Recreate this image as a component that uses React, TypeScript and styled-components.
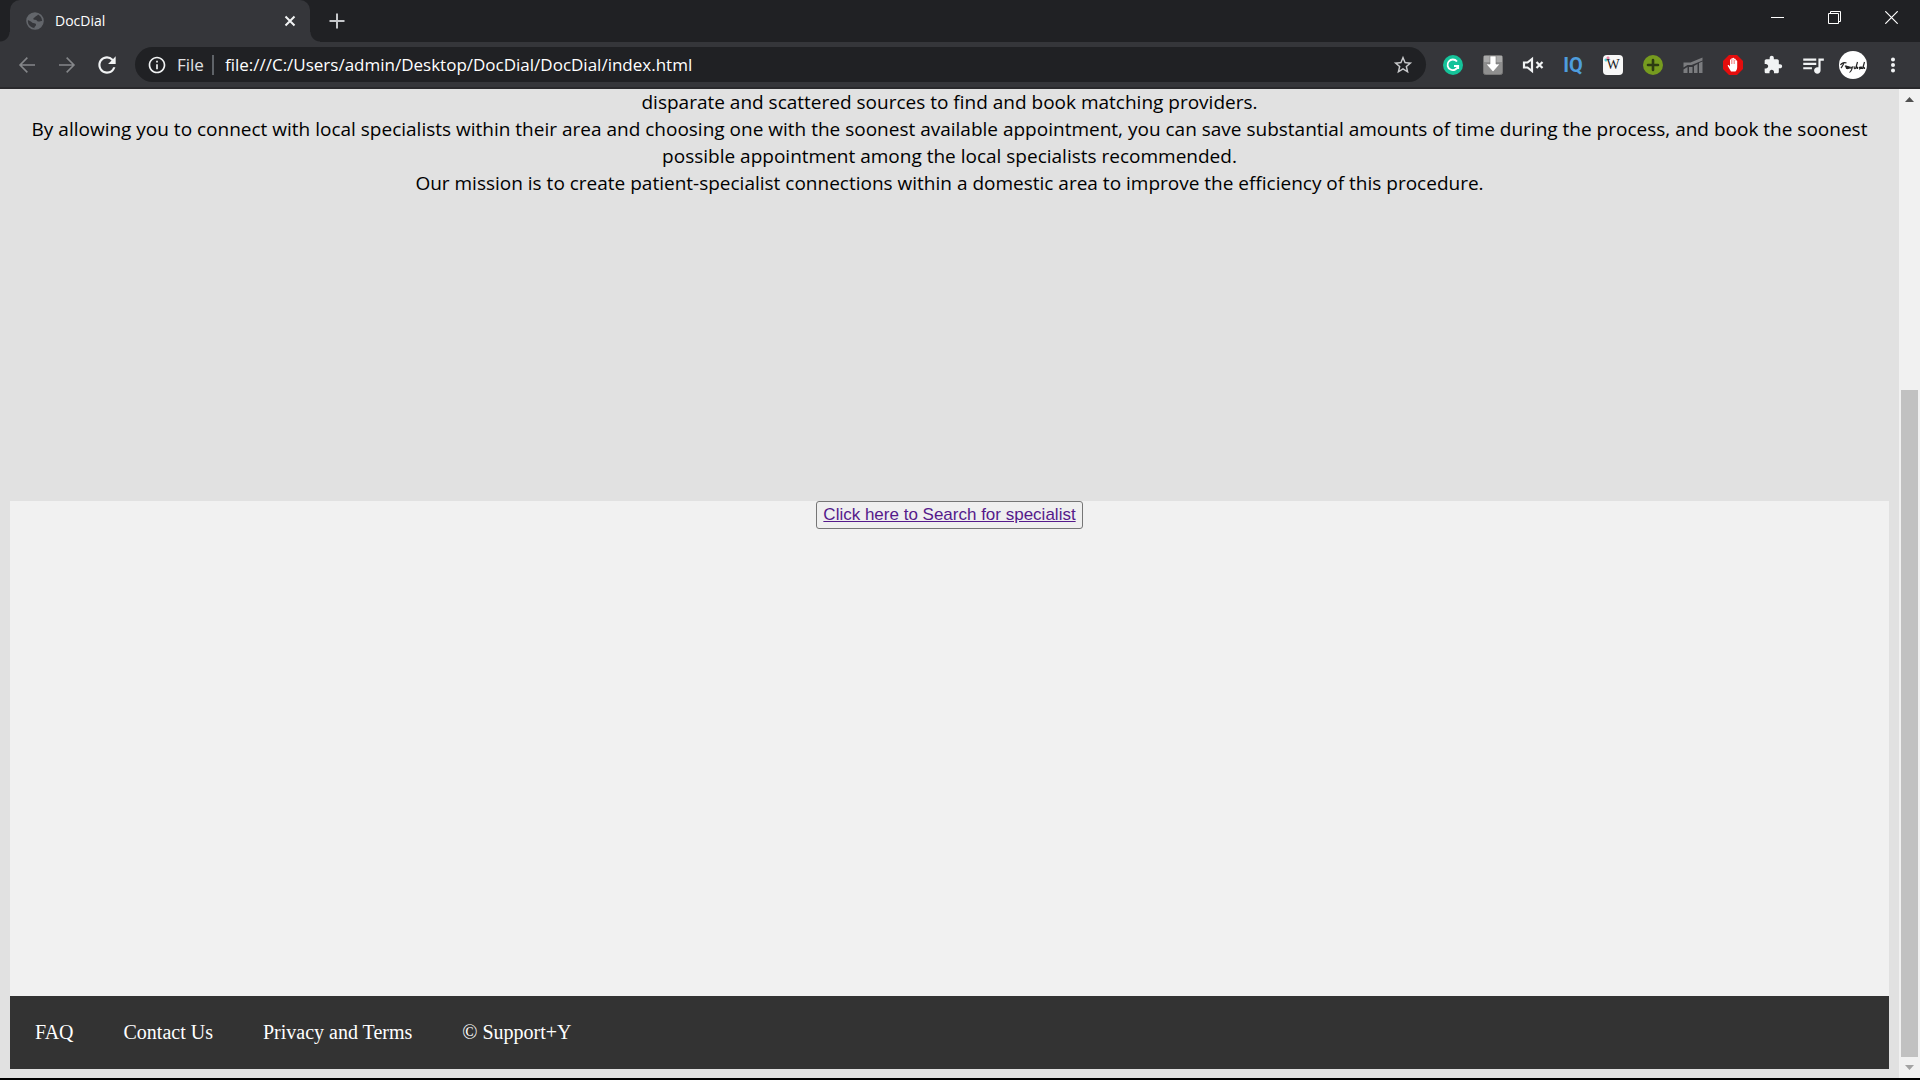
import React from 'react';
import styled, { createGlobalStyle } from 'styled-components';

const ui = '"Open Sans", "Noto Sans", sans-serif';

const GlobalStyle = createGlobalStyle`
  * { box-sizing: border-box; }
  body { margin: 0; background: #000; }
  button, input { font: inherit; margin: 0; padding: 0; border: 0; background: none; color: inherit; }
  svg { display: block; }
`;

const Window = styled.div`
  min-height: 100vh;
  display: flex;
  flex-direction: column;
  border-bottom: 2px solid #000;
`;

const TabStrip = styled.div`
  display: flex;
  height: 42px;
  padding-left: 10px;
  background: #202124;
  color: #fff;
`;

const Tab = styled.div`
  position: relative;
  display: flex;
  align-items: center;
  gap: 10px;
  width: 300px;
  padding: 0 10px 0 15px;
  border-radius: 10px 10px 0 0;
  background: #35363a;
  font: 14px/20px ${ui};

  &::before, &::after {
    content: '';
    position: absolute;
    bottom: 0;
    width: 10px;
    height: 10px;
  }
  &::before { right: 100%; background: radial-gradient(circle at 0 0, transparent 9px, #35363a 10px); }
  &::after { left: 100%; background: radial-gradient(circle at 100% 0, transparent 9px, #35363a 10px); }
`;

const TabTitle = styled.span`
  flex: 1;
`;

const IconButton = styled.button<{ $w?: number; $color?: string }>`
  display: flex;
  align-items: center;
  justify-content: center;
  flex: none;
  width: ${p => p.$w ?? 40}px;
  height: 35px;
  color: ${p => p.$color ?? '#f1f3f4'};
`;

const NewTab = styled(IconButton)`
  height: 42px;
  margin-left: 7px;
  color: #c6c8cb;
`;

const WindowControls = styled.div`
  display: flex;
  margin-left: auto;
`;

const Toolbar = styled.div`
  display: flex;
  align-items: center;
  height: 47px;
  padding: 0 7px;
  background: #35363a;
  border-bottom: 2px solid #29292c;
`;

const Omnibox = styled.div`
  display: flex;
  flex: 1;
  align-items: center;
  height: 35px;
  margin: 0 7px 0 8px;
  padding-left: 2px;
  border-radius: 18px;
  background: #202124;
  font: 17px/24px ${ui};
`;

const Scheme = styled.span`
  padding-right: 8px;
  border-right: 2px solid #5f6368;
  color: #e0e1e3;
  line-height: 20px;
`;

const Address = styled.input`
  flex: 1;
  min-width: 0;
  padding: 0 11px;
  color: #fff;
  outline: none;
`;

const Viewport = styled.div`
  display: flex;
  flex: 1;
`;

const Page = styled.main`
  display: flex;
  flex: 1;
  flex-direction: column;
  padding: 0 10px 9px;
  background: #e1e1e1;
  color: #000;
`;

const Intro = styled.section`
  min-height: 412px;
  font: 19px/27px ${ui};
  text-align: center;

  p { margin: 0; }
`;

const SearchArea = styled.section`
  flex: 1;
  min-height: 495px;
  background: #f1f1f1;
  text-align: center;
`;

const SearchButton = styled.button`
  padding: 3px 6px;
  border: 1px solid #767676;
  border-radius: 3px;
  background: #efefef;
  font: 17px/20px "Liberation Sans", Arial, sans-serif;
  vertical-align: top;

  a { color: #551a8b; text-decoration: underline; }
`;

const Footer = styled.footer`
  display: flex;
  background: #333;
  font: 20px/23px "Liberation Serif", "Times New Roman", serif;

  a {
    padding: 25px;
    color: #fff;
    text-decoration: none;
  }
`;

const ScrollBar = styled.div`
  display: flex;
  flex-direction: column;
  width: 21px;
  background: #f1f1f1;
`;

const ScrollArrow = styled(IconButton)`
  height: 21px;
`;

const Track = styled.div`
  display: grid;
  flex: 1;
  grid-template-rows: 280fr 668fr;
  padding: 0 2px;
`;

const Thumb = styled.div`
  grid-row: 2;
  background: #c1c1c1;
`;

const Glyph = ({ d, size = 22 }: { d: string; size?: number }) => (
  <svg width={size} height={size} viewBox="0 0 24 24" fill="currentColor" aria-hidden="true"><path d={d} /></svg>
);

const paths = {
  back: 'M20 11.2H6.9l6-6L11.8 4.100l-7.900 7.900 7.900 7.900 1.100-1.100-6-6H20z',
  forward: 'M4 11.2h13.100l-6-6 1.100-1.100 7.900 7.900-7.900 7.900-1.100-1.100 6-6H4z',
  reload: 'M17.65 6.35A7.958 7.958 0 0 0 12 4c-4.42 0-7.99 3.58-7.99 8s3.57 8 7.99 8c3.73 0 6.84-2.55 7.73-6h-2.08A5.99 5.99 0 0 1 12 18c-3.31 0-6-2.69-6-6s2.69-6 6-6c1.66 0 3.14.69 4.22 1.78L13 11h7V4l-2.35 2.35z',
  info: 'M11 17h2v-6h-2v6zm1-15C6.48 2 2 6.48 2 12s4.48 10 10 10 10-4.48 10-10S17.52 2 12 2zm0 18c-4.41 0-8-3.59-8-8s3.59-8 8-8 8 3.59 8 8-3.59 8-8 8zM11 9h2V7h-2v2z',
  star: 'M22 9.24l-7.19-.62L12 2 9.19 8.63 2 9.24l5.46 4.73L5.82 21 12 17.27 18.18 21l-1.63-7.03L22 9.24zM12 15.4l-3.76 2.27 1-4.28-3.32-2.88 4.38-.38L12 6.100l1.71 4.040 4.38.38-3.32 2.88 1 4.28L12 15.4z',
  puzzle: 'M20.5 11H19V7c0-1.1-.9-2-2-2h-4V3.5C13 2.12 11.88 1 10.5 1S8 2.12 8 3.5V5H4c-1.1 0-1.99.9-1.99 2v3.8H3.5c1.49 0 2.7 1.21 2.7 2.7s-1.21 2.7-2.7 2.7H2V20c0 1.1.9 2 2 2h3.8v-1.5c0-1.49 1.21-2.7 2.7-2.7s2.7 1.21 2.7 2.7V22H17c1.1 0 2-.9 2-2v-4h1.5c1.38 0 2.5-1.12 2.5-2.5S21.88 11 20.5 11z',
  music: 'M15 6H3v2h12V6zm0 4H3v2h12v-2zM3 16h8v-2H3v2zM17 6v8.18c-.31-.11-.65-.18-1-.18-1.66 0-3 1.34-3 3s1.34 3 3 3 3-1.34 3-3V8h3V6h-5z',
  more: 'M12 8.200a2.200 2.200 0 1 0 0-4.400 2.200 2.200 0 0 0 0 4.400zm0 6a2.200 2.200 0 1 0 0-4.400 2.200 2.200 0 0 0 0 4.400zm0 6a2.200 2.200 0 1 0 0-4.400 2.200 2.200 0 0 0 0 4.400z',
};

const Globe = () => (
  <svg width="20" height="20" viewBox="0 0 20 20" aria-hidden="true">
    <circle cx="10" cy="10" r="8" fill="none" stroke="#63666b" strokeWidth="1.600" />
    <path d="M2 8C3 4 7 1.500 11 2c2 .3 2.500 1 1.500 2.200L10.500 5.500c-.5 1-1.500 1-2 1.800-.6 1 .4 1.500 1.500 1.500 2 .2 1.800 1.500 3.200 1.700 1.800.2 3-.8 4.800-.5-.2 4-3 7.500-7.500 8-1.500-.3-1.500-1.800-.5-2.500 1.200-.8 1.500-2.500.2-3-1.400-.5-2.700-.3-3.700-1.500C5 9.500 4 9.500 2 9z" fill="#63666b" />
  </svg>
);

const Grammar = () => (
  <svg width="20" height="20" viewBox="0 0 20 20" aria-hidden="true">
    <circle cx="10" cy="10" r="10" fill="#15c39a" />
    <path d="M14 6.500A5.300 5.300 0 1 0 15 11h-4M15.200 10.500V14" fill="none" stroke="#fff" strokeWidth="1.800" />
  </svg>
);

const Download = () => (
  <svg width="20" height="20" viewBox="0 0 20 20" aria-hidden="true">
    <rect x=".5" y=".5" width="19" height="19" rx="2" fill="#8f8f8f" stroke="#777" />
    <path d="M1 1h18v6H1z" fill="#aaa" />
    <path d="M7 1h6v8h4l-7 8-7-8h4z" fill="#fff" stroke="#777" strokeWidth=".6" />
  </svg>
);

const Mute = () => (
  <svg width="22" height="20" viewBox="0 0 22 20" fill="none" stroke="#f1f3f4" strokeWidth="2.200" aria-hidden="true">
    <path d="M2 7.500h3.500L10 4v12l-4.500-3.500H2z" />
    <path d="M14.500 7l6 6M20.500 7l-6 6" />
  </svg>
);

const Iq = styled.span`
  color: #4e9ddd;
  font: 700 20px/24px Roboto, sans-serif;
`;

const WordBadge = styled.span`
  width: 20px;
  height: 20px;
  border-radius: 4px;
  background: radial-gradient(circle at 5px 3px, #e8a 1px, transparent 2px), radial-gradient(circle at 3px 5px, #5cd 1px, transparent 2px), #f7f7f7;
  color: #222;
  font: 14px/20px "Liberation Serif", serif;
`;

const AddCircle = () => (
  <svg width="20" height="20" viewBox="0 0 20 20" aria-hidden="true">
    <circle cx="10" cy="10" r="10" fill="#769b1f" />
    <path d="M10 5v10M5 10h10" stroke="#2d3b12" strokeWidth="2.600" strokeLinecap="round" />
  </svg>
);

const Bars = () => (
  <svg width="20" height="20" viewBox="0 0 20 20" fill="#7b7c7f" aria-hidden="true">
    <path d="M.5 7.500h7L19.500 2.500v3L8.500 10H4.500L.5 12.500zM.5 14.500l4-2.500v6h-4zM6 12h3.500v6H6zM11 11l3.500-2v9H11zM16 8l3.500-1.500V18H16z" />
  </svg>
);

const Stop = () => (
  <svg width="20" height="20" viewBox="0 0 20 20" aria-hidden="true">
    <path d="M6 0h8l6 6v8l-6 6H6l-6-6V6z" fill="#e40d0d" />
    <path d="M8 16.500 4.800 11c-.4-1 .8-1.300 1.400-.5L7 11.500V5c0-1 1.400-1 1.400 0V3.700c0-1 1.500-1 1.500 0v-.3c0-1 1.500-1 1.500 0V4.500c0-1 1.400-1 1.400 0V6c0-1 1.400-1 1.400 0v6c0 2-.8 3.500-1.800 4.500z" fill="#fff" />
    <path d="M8.500 5v4M10 4v5M11.500 5v4" stroke="#e40d0d" strokeWidth=".4" />
  </svg>
);

const Avatar = styled.span`
  width: 28px;
  height: 28px;
  border-radius: 50%;
  background: #fff;
  color: #222;
  overflow: hidden;
`;

const Signature = () => (
  <svg width="28" height="28" viewBox="0 0 28 28" fill="none" stroke="#222" strokeWidth="1.200" aria-hidden="true">
    <path d="M1.500 14c1-2 4-3 6-2M5 12c-1 2-2 4-3 5M6 15.500c1-1 2-1 1 1.500M8 16c2-2 2 2 0 1.500s2-2 2-1.500v2M11 15.500c0 3 2 1 2.500 0-.5 3-2 6-3 5.500M15.500 15.500c-1.500 0 1 1.500-.5 2.500M18.500 11l-2 7c1-2 2.500-3 2 0M20 17c1-1.500 2.500-1 1 .5s1-.5 1.500-1v1.500M25.500 11l-2 7c1-2 2-2.500 2 0" />
  </svg>
);

const extensions: [string, React.ReactNode][] = [
  ['Grammar check', <Grammar />],
  ['Downloads', <Download />],
  ['Mute tab', <Mute />],
  ['Keyword research', <Iq>IQ</Iq>],
  ['Word tool', <WordBadge>W</WordBadge>],
  ['Add', <AddCircle />],
  ['Traffic', <Bars />],
  ['Blocker', <Stop />],
  ['Extensions', <Glyph d={paths.puzzle} size={20} />],
  ['Media controls', <Glyph d={paths.music} size={26} />],
  ['Profile', <Avatar><Signature /></Avatar>],
  ['Menu', <Glyph d={paths.more} size={22} />],
];

export default function App() {
  return (
    <Window>
      <GlobalStyle />
      <TabStrip>
        <Tab>
          <Globe />
          <TabTitle>DocDial</TabTitle>
          <IconButton $w={20} aria-label="Close tab">
            <svg width="12" height="12" viewBox="0 0 12 12" stroke="currentColor" strokeWidth="2"><path d="M1.500 1.500l9 9M10.500 1.500l-9 9" /></svg>
          </IconButton>
        </Tab>
        <NewTab aria-label="New tab">
          <svg width="16" height="16" viewBox="0 0 16 16" stroke="currentColor" strokeWidth="2"><path d="M8 .5v15M.5 8h15" /></svg>
        </NewTab>
        <WindowControls>
          <IconButton $w={57} aria-label="Minimize">
            <svg width="13" height="13" viewBox="0 0 13 13" stroke="#fff"><path d="M0 6.500h13" /></svg>
          </IconButton>
          <IconButton $w={57} aria-label="Restore">
            <svg width="13" height="13" viewBox="0 0 13 13" fill="none" stroke="#fff"><path d="M.5 2.500h10v10H.5zM2.500 2.500v-2h10v10h-2" /></svg>
          </IconButton>
          <IconButton $w={57} aria-label="Close">
            <svg width="13" height="13" viewBox="0 0 13 13" stroke="#fff" strokeWidth="1.200"><path d="M.3.3l12.400 12.400M12.700.3.3 12.700" /></svg>
          </IconButton>
        </WindowControls>
      </TabStrip>
      <Toolbar>
        <IconButton $color="#85878a" aria-label="Back"><Glyph d={paths.back} size={24} /></IconButton>
        <IconButton $color="#85878a" aria-label="Forward"><Glyph d={paths.forward} size={24} /></IconButton>
        <IconButton aria-label="Reload"><Glyph d={paths.reload} size={26} /></IconButton>
        <Omnibox>
          <IconButton aria-label="Site information"><Glyph d={paths.info} size={20} /></IconButton>
          <Scheme>File</Scheme>
          <Address aria-label="Address" defaultValue="file:///C:/Users/admin/Desktop/DocDial/DocDial/index.html" />
          <IconButton $w={46} $color="#c9cacc" aria-label="Bookmark"><Glyph d={paths.star} size={22} /></IconButton>
        </Omnibox>
        {extensions.map(([label, icon]) => (
          <IconButton key={label} aria-label={label}>{icon}</IconButton>
        ))}
      </Toolbar>
      <Viewport>
        <Page>
          <Intro>
            <p>disparate and scattered sources to find and book matching providers.</p>
            <p>By allowing you to connect with local specialists within their area and choosing one with the soonest available appointment, you can save substantial amounts of time during the process, and book the soonest possible appointment among the local specialists recommended.</p>
            <p>Our mission is to create patient-specialist connections within a domestic area to improve the efficiency of this procedure.</p>
          </Intro>
          <SearchArea>
            <SearchButton><a href="#search">Click here to Search for specialist</a></SearchButton>
          </SearchArea>
          <Footer>
            <a href="#faq">FAQ</a>
            <a href="#contact">Contact Us</a>
            <a href="#privacy">Privacy and Terms</a>
            <a href="#support">© Support+Y</a>
          </Footer>
        </Page>
        <ScrollBar>
          <ScrollArrow $w={21} $color="#505050" aria-label="Scroll up">
            <svg width="9" height="5" viewBox="0 0 9 5" fill="currentColor"><path d="M0 5 4.500 0 9 5z" /></svg>
          </ScrollArrow>
          <Track><Thumb /></Track>
          <ScrollArrow $w={21} $color="#a3a3a3" aria-label="Scroll down">
            <svg width="9" height="5" viewBox="0 0 9 5" fill="currentColor"><path d="M0 0h9L4.500 5z" /></svg>
          </ScrollArrow>
        </ScrollBar>
      </Viewport>
    </Window>
  );
}
